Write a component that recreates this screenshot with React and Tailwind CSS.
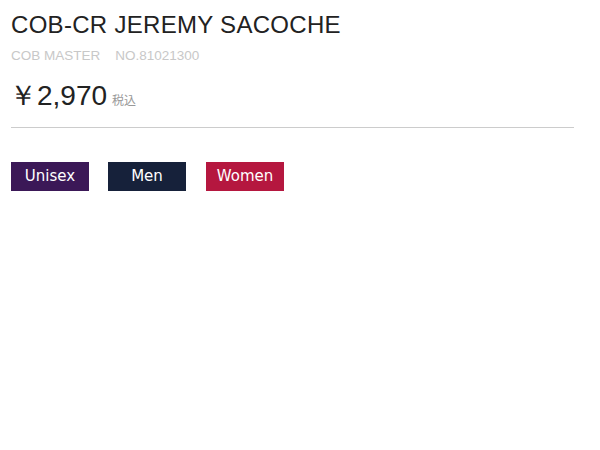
export default function App() {
  return (
    <div className="w-[600px] h-[450px] bg-white px-[11px] pt-[10px]">
      <h1 className="font-['Liberation_Sans',sans-serif] text-[24px] leading-[30px] font-light tracking-[0.3px] text-[#222]">
        COB-CR JEREMY SACOCHE
      </h1>
      <div className="mt-[8px] flex gap-[15px] font-['Liberation_Sans',sans-serif] text-[13.5px] leading-[16px] text-[#c8c8c8]">
        <span>COB MASTER</span>
        <span>NO.81021300</span>
      </div>
      <div className="mt-[14px] flex items-baseline -ml-[2px] font-['Liberation_Sans',sans-serif] text-[#222]">
        <span className="text-[28px] leading-[36px]">￥2,970</span>
        <span className="ml-[5px] text-[12px] text-[#999] font-['Noto_Sans_CJK_JP',sans-serif]">税込</span>
      </div>
      <div className="mt-[13px] w-[563px] border-t border-[#ccc]" />
      <div className="mt-[34px] flex font-['DejaVu_Sans',sans-serif] text-[15px] text-white">
        <div className="w-[78px] h-[29px] flex items-center justify-center bg-[#3b1857]">Unisex</div>
        <div className="ml-[19px] w-[78px] h-[29px] flex items-center justify-center bg-[#16213a]">Men</div>
        <div className="ml-[20px] w-[78px] h-[29px] flex items-center justify-center bg-[#b5173f]">Women</div>
      </div>
    </div>
  );
}
